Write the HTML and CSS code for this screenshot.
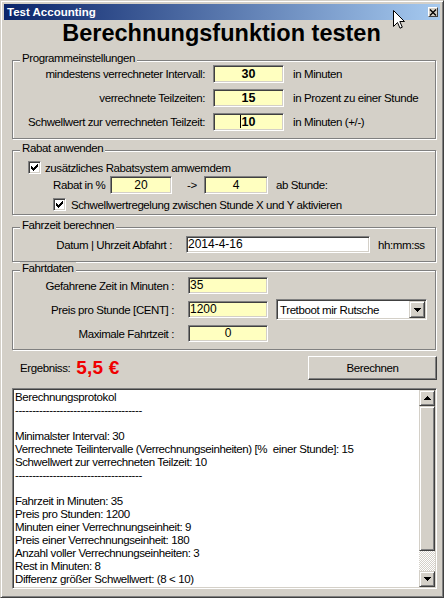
FILE: index.html
```html
<!DOCTYPE html>
<html lang="de">
<head>
<meta charset="utf-8">
<title>Test Accounting</title>
<link rel="stylesheet" href="styles.css">
</head>
<body>
<div class="window">
  <div class="titlebar">
    <span class="title-text">Test Accounting</span>
    <span class="close-btn"><svg width="8" height="7" viewBox="0 0 8 7"><path d="M1 0.5 L7 6.5 M7 0.5 L1 6.5" stroke="#000" stroke-width="1.4" fill="none"/></svg></span>
  </div>
  <div class="client">
    <h1 class="heading">Berechnungsfunktion testen</h1>

    <section class="group g-settings">
      <div class="group-title">Programmeinstellungen</div>
      <div class="settings-grid">
        <span class="lbl-right">mindestens verrechneter Intervall:</span>
        <div class="edit yellow value-bold">30</div>
        <span class="unit">in Minuten</span>
        <span class="lbl-right">verrechnete Teilzeiten:</span>
        <div class="edit yellow value-bold">15</div>
        <span class="unit">in Prozent zu einer Stunde</span>
        <span class="lbl-right">Schwellwert zur verrechneten Teilzeit:</span>
        <div class="edit yellow value-bold"><span class="caret"></span>10</div>
        <span class="unit">in Minuten (+/-)</span>
      </div>
    </section>

    <section class="group g-rabat">
      <div class="group-title">Rabat anwenden</div>
      <div class="check-row row-first">
        <span class="check"><svg width="7" height="7" viewBox="0 0 7 7" shape-rendering="crispEdges"><path d="M6 0h1v1h-1z M5 1h2v1h-2z M0 2h1v1h-1z M4 2h3v1h-3z M0 3h2v1h-2z M3 3h3v1h-3z M0 4h5v1h-5z M1 5h3v1h-3z M2 6h1v1h-1z" fill="#000"/></svg></span>
        <span class="check-label">zusätzliches Rabatsystem amwemdem</span>
      </div>
      <div class="rabat-row">
        <span class="rabat-label">Rabat in %</span>
        <div class="edit yellow center rabat-in">20</div>
        <span class="arrow-text">-&gt;</span>
        <div class="edit yellow center rabat-ab">4</div>
        <span class="rabat-unit">ab Stunde:</span>
      </div>
      <div class="check-row row-second">
        <span class="check"><svg width="7" height="7" viewBox="0 0 7 7" shape-rendering="crispEdges"><path d="M6 0h1v1h-1z M5 1h2v1h-2z M0 2h1v1h-1z M4 2h3v1h-3z M0 3h2v1h-2z M3 3h3v1h-3z M0 4h5v1h-5z M1 5h3v1h-3z M2 6h1v1h-1z" fill="#000"/></svg></span>
        <span class="check-label">Schwellwertregelung zwischen Stunde X und Y aktivieren</span>
      </div>
    </section>

    <section class="group g-fahrzeit">
      <div class="group-title">Fahrzeit berechnen</div>
      <div class="form-grid fahrzeit-grid">
        <span class="lbl-right">Datum | Uhrzeit Abfahrt :</span>
        <div class="edit white date-edit">2014-4-16</div>
        <span class="unit">hh:mm:ss</span>
      </div>
    </section>

    <section class="group g-fahrt">
      <div class="group-title">Fahrtdaten</div>
      <div class="form-grid fahrt-grid">
        <span class="lbl-right">Gefahrene Zeit in Minuten :</span>
        <div class="edit yellow">35</div>
        <span></span>
        <span class="lbl-right">Preis pro Stunde [CENT] :</span>
        <div class="edit yellow">1200</div>
        <div class="combo">
          <span class="combo-text">Tretboot mir Rutsche</span>
          <span class="combo-btn"><svg width="7" height="4" viewBox="0 0 7 4" shape-rendering="crispEdges"><path d="M0 0h7v1h-7z M1 1h5v1h-5z M2 2h3v1h-3z M3 3h1v1h-1z" fill="#000"/></svg></span>
        </div>
        <span class="lbl-right">Maximale Fahrtzeit :</span>
        <div class="edit yellow center">0</div>
        <span></span>
      </div>
    </section>

    <div class="result-row">
      <span class="result-label">Ergebniss:</span>
      <span class="result-value">5,5 €</span>
      <span class="button">Berechnen</span>
    </div>

    <div class="log">
      <div class="log-text">Berechnungsprotokol
-------------------------------------

Minimalster Interval: 30
Verrechnete Teilintervalle (Verrechnungseinheiten) [%  einer Stunde]: 15
Schwellwert zur verrechneten Teilzeit: 10
-------------------------------------

Fahrzeit in Minuten: 35
Preis pro Stunden: 1200
Minuten einer Verrechnungseinheit: 9
Preis einer Verrechnungseinheit: 180
Anzahl voller Verrechnungseinheiten: 3
Rest in Minuten: 8
Differenz größer Schwellwert: (8 &lt; 10)</div>
      <div class="scrollbar">
        <span class="sb-btn"><svg width="7" height="4" viewBox="0 0 7 4" shape-rendering="crispEdges"><path d="M3 0h1v1h-1z M2 1h3v1h-3z M1 2h5v1h-5z M0 3h7v1h-7z" fill="#000"/></svg></span>
        <span class="sb-thumb"></span>
        <span class="sb-track"></span>
        <span class="sb-btn"><svg width="7" height="4" viewBox="0 0 7 4" shape-rendering="crispEdges"><path d="M0 0h7v1h-7z M1 1h5v1h-5z M2 2h3v1h-3z M3 3h1v1h-1z" fill="#000"/></svg></span>
      </div>
    </div>
  </div>
</div>
<svg class="cursor" width="12" height="19" viewBox="0 0 12 19"><path d="M0.5 0.5 V16.5 L4.5 12.5 L7 18.2 L9.3 17.2 L6.8 11.5 H11.5 Z" fill="#fff" stroke="#000" stroke-width="1"/></svg>
</body>
</html>
```

FILE: styles.css
```css
* { box-sizing: border-box; }

html, body {
  margin: 0;
  padding: 0;
}

body {
  width: 444px;
  height: 598px;
  overflow: hidden;
  background: #D4D0C8;
  font-family: "Liberation Sans", Arial, sans-serif;
  font-size: 11.5px;
  letter-spacing: -0.4px;
  color: #000;
}

.window {
  width: 444px;
  height: 598px;
  background: #D4D0C8;
  border: 1px solid;
  border-color: #D4D0C8 #404040 #404040 #D4D0C8;
  box-shadow: inset 1px 1px 0 #fff, inset -1px -1px 0 #808080;
  padding: 3px;
}

/* Title bar */
.titlebar {
  height: 16px;
  background: linear-gradient(to right, #0A246A, #A6CAF0);
  display: flex;
  align-items: center;
  justify-content: space-between;
  padding: 0 2px 0 3px;
}

.title-text {
  color: #fff;
  font-weight: bold;
  font-size: 11.5px;
  letter-spacing: 0;
  line-height: 16px;
}

.close-btn {
  width: 10px;
  height: 10px;
  background: #D4D0C8;
  border: 1px solid;
  border-color: #fff #404040 #404040 #fff;
  display: flex;
  align-items: center;
  justify-content: center;
}

.close-btn svg { display: block; }

/* Client area */
.client {
  padding: 0 3px 0 8px;
}

.heading {
  margin: 0;
  padding-right: 6px;
  text-align: center;
  font-size: 23.5px;
  font-weight: bold;
  letter-spacing: 0;
  line-height: 27px;
}

.group {
  border: 1px solid #808080;
  box-shadow: inset 1px 1px 0 #fff, 1px 1px 0 #fff;
  margin-right: 1px;
}

.group-title {
  display: table;
  margin: -9px 0 0 7px;
  padding: 0 2px;
  background: #D4D0C8;
  line-height: 13px;
}

.g-settings { margin-top: 13px; padding-bottom: 7px; }
.g-rabat { margin-top: 11px; padding-bottom: 3px; }
.g-fahrzeit { margin-top: 12px; padding-bottom: 8px; }
.g-fahrt { margin-top: 8px; padding-bottom: 7px; }

/* Edits */
.edit {
  height: 18px;
  line-height: 16px;
  border: 1px solid;
  border-color: #808080 #fff #fff #808080;
  box-shadow: inset 1px 1px 0 #404040, inset -1px -1px 0 #D4D0C8;
  padding: 0 1px;
  font-size: 12px;
  letter-spacing: 0;
  white-space: nowrap;
}

.yellow { background: #FFFFC0; }
.white { background: #fff; }
.center { text-align: center; }

.value-bold {
  text-align: center;
  font-weight: bold;
  font-size: 12.5px;
}

.caret {
  display: inline-block;
  width: 1px;
  height: 13px;
  background: #000;
  vertical-align: -2px;
  margin: 0 1px 0 -2px;
}

/* Settings grid */
.settings-grid {
  display: grid;
  grid-template-columns: 192px 71px auto;
  grid-auto-rows: 18px;
  column-gap: 8px;
  row-gap: 6px;
  align-items: center;
}

.lbl-right {
  text-align: right;
  white-space: nowrap;
}

.unit {
  margin-left: 1px;
  white-space: nowrap;
}

/* Rabat group */
.check-row {
  display: flex;
  align-items: center;
  height: 13px;
}

.row-first { margin-top: 6px; padding-left: 15px; }
.row-second { margin-top: 4px; padding-left: 40px; }

.check {
  width: 13px;
  height: 13px;
  flex: none;
  background: #fff;
  border: 1px solid;
  border-color: #808080 #fff #fff #808080;
  box-shadow: inset 1px 1px 0 #404040, inset -1px -1px 0 #D4D0C8;
  display: flex;
  align-items: center;
  justify-content: center;
}

.check svg { display: block; }

.check-label {
  margin-left: 4px;
  white-space: nowrap;
}

.row-second .check-label { margin-left: 5px; }

.rabat-row {
  display: flex;
  align-items: center;
  margin-top: 2px;
  padding-left: 40px;
}

.rabat-label { width: 57px; white-space: nowrap; }
.rabat-in { width: 62px; }
.arrow-text { width: 17px; margin-left: 15px; }
.rabat-ab { width: 64px; }
.rabat-unit { margin-left: 8px; white-space: nowrap; }

/* Fahrzeit / Fahrt grids */
.form-grid {
  display: grid;
  column-gap: 14px;
  align-items: center;
}

.fahrzeit-grid {
  margin-top: 4px;
  grid-template-columns: 159px 184px auto;
}

.fahrzeit-grid .unit { margin-left: -6px; }

.date-edit { height: 17px; line-height: 15px; }

.fahrt-grid {
  margin-top: 2px;
  grid-template-columns: 161px 80px 145px;
  grid-auto-rows: 17px;
  row-gap: 7px;
}

.fahrt-grid .edit { height: 17px; line-height: 15px; }

.combo {
  margin-left: -6px;
  height: 21px;
  margin-top: -2px;
  margin-bottom: -2px;
  background: #fff;
  border: 1px solid;
  border-color: #808080 #fff #fff #808080;
  box-shadow: inset 1px 1px 0 #404040, inset -1px -1px 0 #D4D0C8;
  padding: 1px 1px 1px 3px;
  display: flex;
  align-items: center;
  justify-content: space-between;
}

.combo-text { white-space: nowrap; }

.combo-btn {
  width: 16px;
  height: 17px;
  background: #D4D0C8;
  border: 1px solid;
  border-color: #D4D0C8 #404040 #404040 #D4D0C8;
  box-shadow: inset 1px 1px 0 #fff, inset -1px -1px 0 #808080;
  display: flex;
  align-items: center;
  justify-content: center;
}

.combo-btn svg, .sb-btn svg { display: block; }

/* Result row */
.result-row {
  display: flex;
  align-items: center;
  height: 24px;
  margin-top: 6px;
  padding-left: 8px;
}

.result-label { white-space: nowrap; }

.result-value {
  margin-left: 6px;
  color: #F00000;
  font-weight: bold;
  font-size: 19px;
  letter-spacing: 0.2px;
}

.button {
  margin-left: auto;
  width: 129px;
  height: 24px;
  border: 1px solid;
  border-color: #fff #404040 #404040 #fff;
  box-shadow: inset -1px -1px 0 #808080;
  display: flex;
  align-items: center;
  justify-content: center;
}

/* Log */
.log {
  margin-top: 8px;
  height: 201px;
  background: #fff;
  border: 1px solid;
  border-color: #808080 #fff #fff #808080;
  box-shadow: inset 1px 1px 0 #404040, inset -1px -1px 0 #D4D0C8;
  padding: 1px;
  display: flex;
}

.log-text {
  flex: 1;
  white-space: pre;
  overflow: hidden;
  line-height: 13px;
  padding: 1px 0 0 1px;
}

.scrollbar {
  width: 16px;
  flex: none;
  display: flex;
  flex-direction: column;
}

.sb-btn, .sb-thumb {
  background: #D4D0C8;
  border: 1px solid;
  border-color: #D4D0C8 #404040 #404040 #D4D0C8;
  box-shadow: inset 1px 1px 0 #fff, inset -1px -1px 0 #808080;
}

.sb-btn {
  height: 16px;
  flex: none;
  display: flex;
  align-items: center;
  justify-content: center;
}

.sb-thumb {
  height: 145px;
  flex: none;
}

.sb-track {
  flex: 1;
  background: repeating-conic-gradient(#D4D0C8 0 25%, #fff 0 50%) 0 0 / 2px 2px;
}

/* Mouse pointer overlay */
.cursor {
  position: absolute;
  left: 393px;
  top: 10px;
}
```
